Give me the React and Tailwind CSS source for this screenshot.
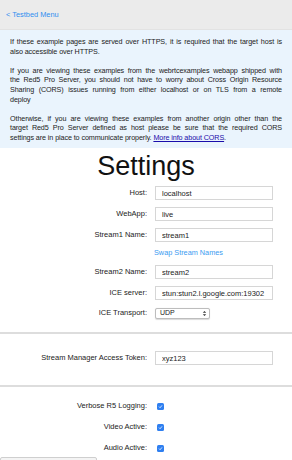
import { useState } from "react";

const FONT = { fontFamily: '"Liberation Sans", Arial, sans-serif' };

function Row({ label, children, className = "" }) {
  return (
    <div className={`flex items-center h-[14px] ${className}`}>
      <label className="w-[148px] pr-[1px] text-right text-[7.5px] text-[#222]">{label}</label>
      <div className="ml-[7px] flex items-center">{children}</div>
    </div>
  );
}

function TextField({ value }) {
  return (
    <input
      defaultValue={value}
      className="w-[118px] h-[14px] border border-[#d6d6d6] bg-white px-[6px] text-[7.5px] text-[#222] outline-none"
      style={FONT}
    />
  );
}

function Check() {
  return (
    <span className="ml-[2px] flex h-[7px] w-[7px] items-center justify-center rounded-[1.5px] bg-[#2f7ff0]">
      <svg width="5" height="5" viewBox="0 0 10 10">
        <path d="M2 5.2 L4.2 7.4 L8 2.8" stroke="white" strokeWidth="1.6" fill="none" />
      </svg>
    </span>
  );
}

// one justified line of the notice
function Line({ children, last = false }) {
  return (
    <div className={`whitespace-nowrap ${last ? "" : "text-justify [text-align-last:justify]"}`}>
      {children}
    </div>
  );
}

export default function App() {
  const [transport] = useState("UDP");

  return (
    <div className="w-[292px] h-[460px] overflow-hidden bg-white" style={FONT}>
      {/* Header */}
      <div className="h-[30px] flex items-center px-[6px] bg-[#ebebeb] border-b border-[#e2e2e2]">
        <a className="text-[7.4px] text-[#2e8ef0]">&lt; Testbed Menu</a>
      </div>

      {/* Info */}
      <div className="bg-[#eaf4fd] px-[10px] pt-[7px] pb-[5.5px] text-[7.2px] leading-[9.6px] tracking-[-0.1px] text-[#222]">
        <div>
          <Line>If these example pages are served over HTTPS, it is required that the target host is</Line>
          <Line last>also accessible over HTTPS.</Line>
        </div>
        <div className="mt-[9.6px]">
          <Line>If you are viewing these examples from the webrtcexamples webapp shipped with</Line>
          <Line>the Red5 Pro Server, you should not have to worry about Cross Origin Resource</Line>
          <Line>Sharing (CORS) issues running from either localhost or on TLS from a remote</Line>
          <Line last>deploy</Line>
        </div>
        <div className="mt-[9.6px]">
          <Line>Otherwise, if you are viewing these examples from another origin other than the</Line>
          <Line>target Red5 Pro Server defined as host please be sure that the required CORS</Line>
          <Line last>
            settings are in place to communicate properly.{" "}
            <a className="text-[#1a0dab] underline">More info about CORS</a>.
          </Line>
        </div>
      </div>

      {/* Settings */}
      <h1 className="mt-[4px] text-center text-[27px] leading-[28px] text-[#111]">Settings</h1>

      <div className="mt-[6px]">
        <Row label="Host:">
          <TextField value="localhost" />
        </Row>
        <Row label="WebApp:" className="mt-[7px]">
          <TextField value="live" />
        </Row>
        <Row label="Stream1 Name:" className="mt-[7px]">
          <TextField value="stream1" />
        </Row>
        <div className="mt-[7px] h-[8px] flex items-center pl-[154px] text-[7.3px] text-[#3c9bf1]">
          Swap Stream Names
        </div>
        <Row label="Stream2 Name:" className="mt-[8px]">
          <TextField value="stream2" />
        </Row>
        <Row label="ICE server:" className="mt-[7px]">
          <TextField value="stun:stun2.l.google.com:19302" />
        </Row>
        <Row label="ICE Transport:" className="mt-[6px]">
          <div className="w-[55px] h-[11px] flex items-center justify-between rounded-[2px] border border-[#bdbdbd] bg-white pl-[4px] pr-[2px] text-[7px] text-[#222] shadow-[0_0.5px_1px_rgba(0,0,0,0.15)]">
            <span>{transport}</span>
            <svg width="5" height="7" viewBox="0 0 5 7">
              <path d="M0.8 2.8 L2.5 1 L4.2 2.8 Z M0.8 4.2 L2.5 6 L4.2 4.2 Z" fill="#333" />
            </svg>
          </div>
        </Row>
      </div>

      <hr className="mt-[12px] border-0 h-[2px] bg-[#dddddd]" />

      <Row label="Stream Manager Access Token:" className="mt-[17px]">
        <TextField value="xyz123" />
      </Row>

      <hr className="mt-[20px] border-0 h-[2px] bg-[#dddddd]" />

      <div className="mt-[12px]">
        <Row label="Verbose R5 Logging:">
          <Check />
        </Row>
        <Row label="Video Active:" className="mt-[7px]">
          <Check />
        </Row>
        <Row label="Audio Active:" className="mt-[7px]">
          <Check />
        </Row>
      </div>

      <div className="mt-[2px] w-[97px] h-[10px] border border-[#cfcfcf] bg-[#f4f4f4] rounded-[2px]" />
    </div>
  );
}
